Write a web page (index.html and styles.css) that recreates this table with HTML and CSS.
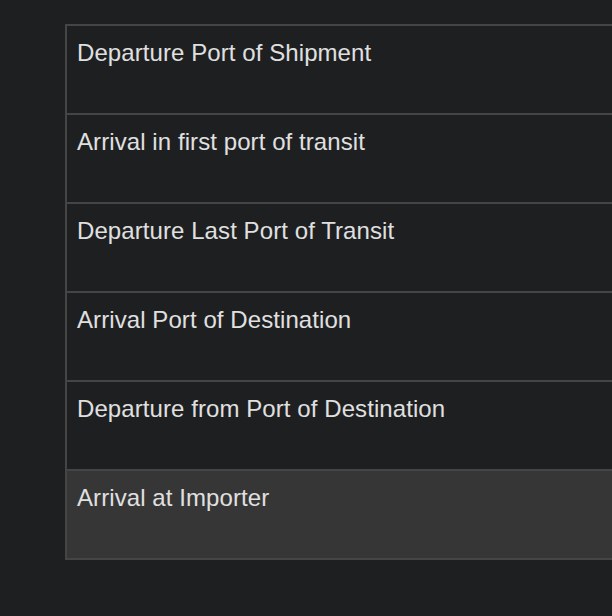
FILE: index.html
```html
<!DOCTYPE html>
<html>
<head>
<meta charset="utf-8">
<link rel="stylesheet" href="styles.css">
</head>
<body>
<div class="page">
  <div class="table">
    <div class="row"><span class="label">Departure Port of Shipment</span></div>
    <div class="row"><span class="label">Arrival in first port of transit</span></div>
    <div class="row"><span class="label">Departure Last Port of Transit</span></div>
    <div class="row"><span class="label">Arrival Port of Destination</span></div>
    <div class="row"><span class="label">Departure from Port of Destination</span></div>
    <div class="row row-active"><span class="label">Arrival at Importer</span></div>
  </div>
</div>
</body>
</html>
```
FILE: styles.css
```css
html, body {
  margin: 0;
  padding: 0;
  background: #1e1f21;
  overflow: hidden;
}
.page {
  padding: 24px 0 0 65px;
  width: 700px;
}
.table {
  border: 2px solid #454545;
  border-bottom: none;
  width: 640px;
}
.row {
  border-bottom: 2px solid #454545;
  padding: 13px 10px 0;
  box-sizing: content-box;
  height: 74px;
  font-family: "Liberation Sans", Arial, sans-serif;
  font-size: 24px;
  line-height: 28px;
  letter-spacing: 0.08px;
  color: #e0e0e0;
}
.row-active {
  background: #363636;
}
```
